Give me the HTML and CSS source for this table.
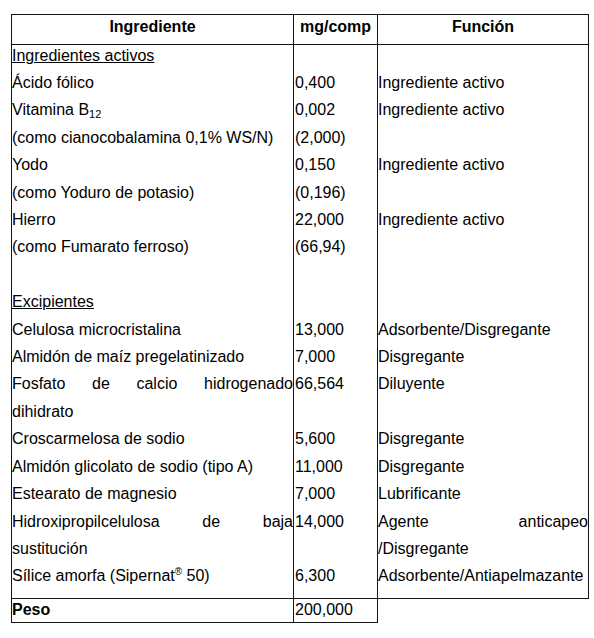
FILE: index.html
```html
<!DOCTYPE html>
<html lang="es">
<head>
<meta charset="utf-8">
<title>Composición</title>
<link rel="stylesheet" href="styles.css">
</head>
<body>
<table class="tbl">
  <colgroup>
    <col class="w1"><col class="w2"><col class="w3">
  </colgroup>
  <thead>
    <tr><th>Ingrediente</th><th>mg/comp</th><th>Función</th></tr>
  </thead>
  <tbody>
    <tr class="first"><td class="c1"><span class="u">Ingredientes activos</span></td><td class="c2"></td><td class="c3"></td></tr>
    <tr><td class="c1">Ácido fólico</td><td class="c2">0,400</td><td class="c3">Ingrediente activo</td></tr>
    <tr><td class="c1">Vitamina B<sub>12</sub></td><td class="c2">0,002</td><td class="c3">Ingrediente activo</td></tr>
    <tr><td class="c1">(como cianocobalamina 0,1% WS/N)</td><td class="c2">(2,000)</td><td class="c3"></td></tr>
    <tr><td class="c1">Yodo</td><td class="c2">0,150</td><td class="c3">Ingrediente activo</td></tr>
    <tr><td class="c1">(como Yoduro de potasio)</td><td class="c2">(0,196)</td><td class="c3"></td></tr>
    <tr><td class="c1">Hierro</td><td class="c2">22,000</td><td class="c3">Ingrediente activo</td></tr>
    <tr><td class="c1">(como Fumarato ferroso)</td><td class="c2">(66,94)</td><td class="c3"></td></tr>
    <tr><td class="c1">&nbsp;</td><td class="c2"></td><td class="c3"></td></tr>
    <tr><td class="c1"><span class="u">Excipientes</span></td><td class="c2"></td><td class="c3"></td></tr>
    <tr><td class="c1">Celulosa microcristalina</td><td class="c2">13,000</td><td class="c3">Adsorbente/Disgregante</td></tr>
    <tr><td class="c1">Almidón de maíz pregelatinizado</td><td class="c2">7,000</td><td class="c3">Disgregante</td></tr>
    <tr><td class="c1"><span class="jl">Fosfato de calcio hidrogenado</span>dihidrato</td><td class="c2">66,564</td><td class="c3">Diluyente</td></tr>
    <tr><td class="c1">Croscarmelosa de sodio</td><td class="c2">5,600</td><td class="c3">Disgregante</td></tr>
    <tr><td class="c1">Almidón glicolato de sodio (tipo A)</td><td class="c2">11,000</td><td class="c3">Disgregante</td></tr>
    <tr><td class="c1">Estearato de magnesio</td><td class="c2">7,000</td><td class="c3">Lubrificante</td></tr>
    <tr><td class="c1"><span class="jl">Hidroxipropilcelulosa de baja</span>sustitución</td><td class="c2">14,000</td><td class="c3"><span class="jl">Agente anticapeo</span>/Disgregante</td></tr>
    <tr class="last"><td class="c1">Sílice amorfa (Sipernat<sup>®</sup> 50)</td><td class="c2">6,300</td><td class="c3">Adsorbente/Antiapelmazante</td></tr>
    <tr class="total"><td class="c1"><b>Peso</b></td><td class="c2">200,000</td><td class="c3 empty"></td></tr>
  </tbody>
</table>
</body>
</html>
```
FILE: styles.css
```css
html, body {
  margin: 0;
  padding: 0;
  background: #ffffff;
}

body {
  font-family: "Liberation Sans", Arial, sans-serif;
  font-size: 16px;
  color: #000000;
}

.tbl {
  border-collapse: collapse;
  table-layout: fixed;
  width: 577px;
  margin: 14px 0 0 11px;
}

.w1 { width: 282px; }
.w2 { width: 84px; }
.w3 { width: 211px; }

.tbl th,
.tbl td {
  padding: 0;
  vertical-align: top;
  border-left: 1px solid #151515;
  border-right: 1px solid #151515;
}

.tbl th {
  font-weight: bold;
  text-align: center;
  line-height: 22px;
  padding: 1px 0 6px;
  border: 1px solid #151515;
}

.tbl td {
  line-height: 27.4px;
}

.c1 {
  text-align: justify;
}

.tbl td.c2 {
  padding-left: 1px;
}

.c3 {
  text-align: justify;
}

.jl {
  display: block;
  text-align: justify;
  text-align-last: justify;
}

.u {
  text-decoration: underline;
}

.tbl .first td {
  line-height: 22px;
  padding-bottom: 2px;
}

.tbl .last td {
  padding-bottom: 8px;
  border-bottom: 1px solid #151515;
}

.tbl .total td {
  line-height: 22px;
  padding-bottom: 1px;
  border-bottom: 1px solid #151515;
}

.tbl .total td.empty {
  border-right: none;
  border-bottom: none;
}

sub {
  font-size: 11px;
  line-height: 0;
  vertical-align: -3px;
}

sup {
  font-size: 10px;
  line-height: 0;
  vertical-align: 6px;
}
```
